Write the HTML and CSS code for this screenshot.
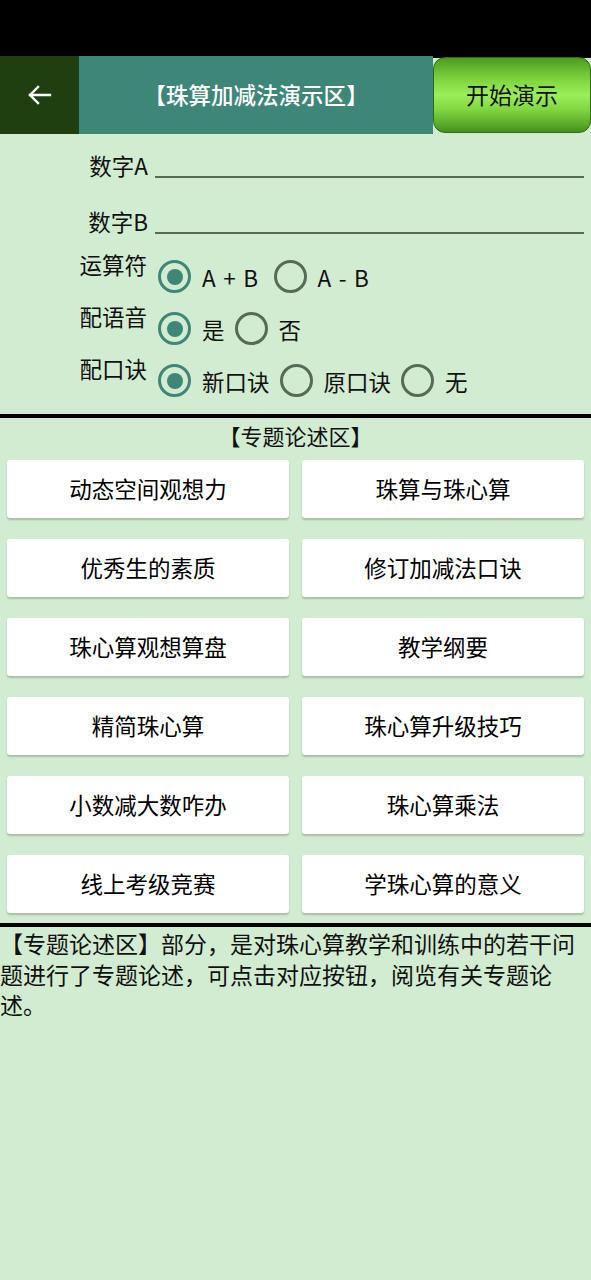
FILE: index.html
```html
<!DOCTYPE html>
<html lang="zh">
<head>
<meta charset="utf-8">
<link rel="stylesheet" href="styles.css">
</head>
<body>
<div class="status"></div>
<div class="header">
  <div class="back">
    <svg width="24" height="20" viewBox="0 0 24 20"><path d="M2 10 H22 M2 10 L10 2 M2 10 L10 18" stroke="#fff" stroke-width="2.4" fill="none" stroke-linecap="square"/></svg>
  </div>
  <div class="title">【珠算加减法演示区】</div>
  <div class="start-wrap"><div class="start">开始演示</div></div>
</div>

<div class="field"><div class="label">数字A</div><div class="line"></div></div>
<div class="field"><div class="label">数字B</div><div class="line"></div></div>

<div class="opt-row">
  <div class="label">运算符</div>
  <div class="opts">
    <span class="radio on"></span><span class="opt-text latin">A + B</span>
    <span class="radio"></span><span class="opt-text latin">A - B</span>
  </div>
</div>
<div class="opt-row">
  <div class="label">配语音</div>
  <div class="opts">
    <span class="radio on"></span><span class="opt-text">是</span>
    <span class="radio"></span><span class="opt-text">否</span>
  </div>
</div>
<div class="opt-row">
  <div class="label">配口诀</div>
  <div class="opts">
    <span class="radio on"></span><span class="opt-text">新口诀</span>
    <span class="radio"></span><span class="opt-text">原口诀</span>
    <span class="radio"></span><span class="opt-text">无</span>
  </div>
</div>

<div class="divider first"></div>
<div class="sec-title">【专题论述区】</div>
<div class="grid">
  <div class="btn">动态空间观想力</div>
  <div class="btn">珠算与珠心算</div>
  <div class="btn">优秀生的素质</div>
  <div class="btn">修订加减法口诀</div>
  <div class="btn">珠心算观想算盘</div>
  <div class="btn">教学纲要</div>
  <div class="btn">精简珠心算</div>
  <div class="btn">珠心算升级技巧</div>
  <div class="btn">小数减大数咋办</div>
  <div class="btn">珠心算乘法</div>
  <div class="btn">线上考级竞赛</div>
  <div class="btn">学珠心算的意义</div>
</div>
<div class="divider"></div>
<p class="desc">【专题论述区】部分，是对珠心算教学和训练中的若干问题进行了专题论述，可点击对应按钮，阅览有关专题论述。</p>
</body>
</html>
```

FILE: styles.css
```css
html, body {
  margin: 0;
  padding: 0;
}
body {
  background: #d1ecd0;
  font-family: "Noto Sans CJK SC", "Noto Sans", sans-serif;
  color: #111;
  width: 591px;
  min-height: 1280px;
}
.status {
  height: 56px;
  background: #000;
}
.header {
  display: flex;
  height: 78px;
}
.back {
  width: 79px;
  background: #1f3f10;
  display: flex;
  align-items: center;
  justify-content: center;
}
.title {
  flex: 1;
  background: #3e8677;
  color: #fff;
  font-size: 22.5px;
  font-weight: 500;
  display: flex;
  align-items: center;
  justify-content: center;
  padding-bottom: 2px;
}
.start-wrap {
  width: 158px;
  background: linear-gradient(#000 0 2px, transparent 2px);
  padding: 1px 0 1px 0;
  box-sizing: border-box;
}
.start {
  height: 100%;
  box-sizing: border-box;
  border: 1.5px solid #2f6a12;
  border-radius: 12px;
  background: linear-gradient(#4c9b1f 0%, #7fd640 30%, #9bef58 50%, #7fd640 70%, #45911c 100%);
  color: #111;
  font-size: 23px;
  display: flex;
  align-items: center;
  justify-content: center;
  padding-bottom: 2px;
}
.field {
  display: flex;
  align-items: flex-start;
  height: 56px;
}
.label {
  width: 150px;
  box-sizing: border-box;
  padding-right: 2px;
  text-align: right;
  font-size: 22.5px;
  line-height: 30px;
  flex: none;
}
.field .label {
  padding-top: 16px;
  padding-right: 2px;
}
.line {
  flex: 1;
  height: 42px;
  margin-left: 5px;
  margin-right: 7px;
  border-bottom: 2px solid #566b56;
}
.opt-row {
  display: flex;
  align-items: flex-start;
  height: 52px;
}
.opt-row .label {
  padding-top: 3px;
  padding-right: 3px;
}
.opts {
  display: flex;
  align-items: center;
  padding-top: 14px;
  padding-left: 8px;
}
.radio {
  width: 33px;
  height: 33px;
  box-sizing: border-box;
  border: 3.5px solid #566b56;
  border-radius: 50%;
  flex: none;
  display: flex;
  align-items: center;
  justify-content: center;
}
.radio.on {
  border-color: #3e8677;
}
.radio.on::after {
  content: "";
  width: 16px;
  height: 16px;
  border-radius: 50%;
  background: #3e8677;
}
.opt-text {
  font-size: 22.5px;
  line-height: 30px;
  margin-left: 11px;
  margin-right: 10px;
}
.opt-text.latin {
  word-spacing: 1.5px;
  letter-spacing: 0.5px;
  margin-right: 15px;
}
.divider {
  height: 4px;
  background: #000;
}
.divider.first {
  margin-top: 12px;
}
.sec-title {
  height: 42px;
  line-height: 34px;
  text-align: center;
  font-size: 22px;
}
.grid {
  display: grid;
  grid-template-columns: 1fr 1fr;
  column-gap: 13px;
  row-gap: 21px;
  padding: 0 7px;
  margin-bottom: 10px;
}
.btn {
  height: 58px;
  box-sizing: border-box;
  padding-bottom: 3px;
  background: #fff;
  border-radius: 3px;
  box-shadow: 0 2px 2px rgba(0, 0, 0, 0.2);
  display: flex;
  align-items: center;
  justify-content: center;
  font-size: 22.5px;
  font-weight: 400;
  color: #000;
}
.desc {
  margin: 0;
  padding-top: 1px;
  font-size: 23px;
  line-height: 30.5px;
  color: #111;
}
```
